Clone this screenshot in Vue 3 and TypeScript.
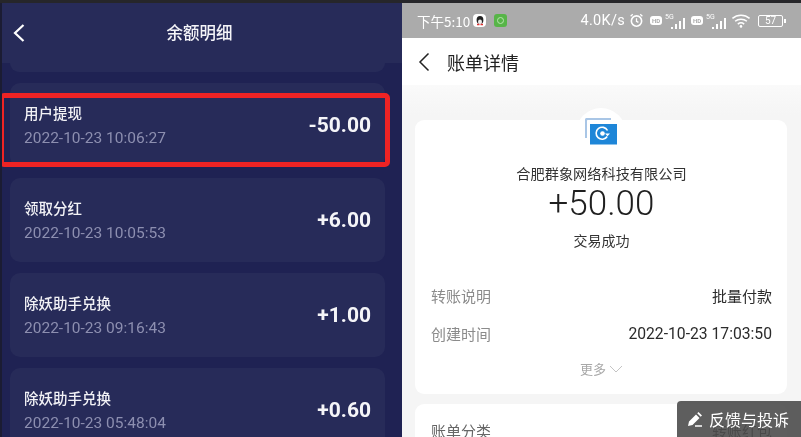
<template>
  <div class="screen">
    <div class="top-strip"></div>
    <div class="panels">
      <section class="wallet">
        <header class="wallet-head">
          <svg class="wallet-back" viewBox="0 0 14 20" width="14" height="20">
            <path d="M11.500 2 3 10l8.500 8" fill="none" stroke="#fff" stroke-width="2.200" />
          </svg>
          <h1 class="wallet-title">余额明细</h1>
        </header>
        <div class="wallet-list">
          <div class="stub"></div>
          <div v-for="item in records" :key="item.time" class="record">
            <div>
              <div class="record-name">{{ item.name }}</div>
              <div class="record-time">{{ item.time }}</div>
            </div>
            <div class="record-amount">{{ item.amount }}</div>
          </div>
        </div>
        <div class="mark"></div>
      </section>

      <section class="bill">
        <div class="status">
          <span class="clock">下午5:10</span>
          <span class="qq">
            <svg viewBox="0 0 12 12" width="12" height="12">
              <ellipse cx="6" cy="5" rx="3.400" ry="4" fill="#222" />
              <ellipse cx="6" cy="7" rx="2" ry="2.400" fill="#eee" />
              <path d="M3 9.500h2.500M6.500 9.500H9" stroke="#d33" stroke-width="1.400" />
            </svg>
          </span>
          <span class="app-badge"><i></i></span>
          <span class="status-right">
            <span class="speed">4.0K/s</span>
            <svg viewBox="0 0 14 14" width="15" height="15">
              <circle cx="7" cy="7.500" r="4.800" fill="none" stroke="#fff" stroke-width="1.500" />
              <path d="M7 5v2.700l1.800 1M1.500 3 3.500 1.200M12.500 3l-2-1.800" fill="none" stroke="#fff" stroke-width="1.200" />
            </svg>
            <span v-for="sim in 2" :key="sim" class="signal-group">
              <span class="hd">HD</span>
              <span class="cell">
                <span class="net">5G</span>
                <span class="bars"><i v-for="h in barHeights" :key="h" :style="{ height: h + 'px' }"></i></span>
              </span>
            </span>
            <svg class="wifi" viewBox="0 0 18 14" width="20" height="15">
              <path d="M1 5c4.500-4 11.500-4 16 0M3.500 7.700c3-2.600 8-2.600 11 0M6 10.300c1.700-1.300 4.300-1.300 6 0" fill="none" stroke="#fff" stroke-width="1.400" />
              <circle cx="9" cy="12.500" r="1.200" fill="#fff" />
            </svg>
            <span class="battery">57</span>
          </span>
        </div>
        <nav class="bill-nav">
          <svg viewBox="0 0 12 20" width="12" height="20">
            <path d="M10.500 1.500 2 10l8.500 8.500" fill="none" stroke="#222" stroke-width="1.500" />
          </svg>
          <span class="bill-title">账单详情</span>
        </nav>
        <div class="bill-body">
          <div class="bill-card">
            <div class="logo-halo">
              <svg viewBox="0 0 32 27" width="32" height="27">
                <path d="M0 20V1.500C0 .7.700 0 1.500 0H26v2H3c-.6 0-1 .4-1 1v17z" fill="#a9c6e6" />
                <rect x="5" y="6" width="27" height="20.500" fill="#1e86d8" />
                <path d="M22.500 12.500a6 6 0 1 0-.3 6" fill="none" stroke="#fff" stroke-width="1.600" />
                <path d="M20 15.500h5l-2.500 2.800z" fill="#fff" />
                <circle cx="17.500" cy="15.500" r="2.300" fill="#fff" />
              </svg>
            </div>
            <div class="payer">合肥群象网络科技有限公司</div>
            <div class="paid">+50.00</div>
            <div class="state">交易成功</div>
            <div class="row first-row">
              <span class="row-label">转账说明</span>
              <span class="row-value cjk">批量付款</span>
            </div>
            <div class="row">
              <span class="row-label">创建时间</span>
              <span class="row-value">2022-10-23 17:03:50</span>
            </div>
            <div class="more">
              更多
              <svg viewBox="0 0 14 8" width="14" height="8">
                <path d="M1 1l6 6 6-6" fill="none" stroke="#c4c4c4" stroke-width="1" />
              </svg>
            </div>
          </div>
          <div class="bill-card next-card">
            <span class="row-label dark">账单分类</span>
            <span class="row-value cjk">转账红包</span>
          </div>
        </div>
        <div class="feedback">
          <svg viewBox="0 0 16 16" width="16" height="16">
            <path d="M1 15l1-4.500 7-7 3.500 3.500-7 7zM10.200 2.300l1.300-1.300 3.500 3.500-1.300 1.300z" fill="#fff" />
            <path d="M8 15h7" stroke="#fff" stroke-width="1.500" />
          </svg>
          反馈与投诉
        </div>
      </section>
    </div>
  </div>
</template>

<script setup lang="ts">
interface BalanceRecord {
  name: string;
  time: string;
  amount: string;
}

const records: BalanceRecord[] = [
  { name: '用户提现', time: '2022-10-23 10:06:27', amount: '-50.00' },
  { name: '领取分红', time: '2022-10-23 10:05:53', amount: '+6.00' },
  { name: '除妖助手兑换', time: '2022-10-23 09:16:43', amount: '+1.00' },
  { name: '除妖助手兑换', time: '2022-10-23 05:48:04', amount: '+0.60' },
];

const barHeights = [2, 5, 8, 11];
</script>

<style>
html,
body {
  margin: 0;
  overflow: hidden;
}
</style>

<style scoped>
.screen {
  width: 801px;
  height: 437px;
  overflow: hidden;
  display: flex;
  flex-direction: column;
  font-family: Roboto, "Noto Sans CJK SC", sans-serif;
}

.top-strip {
  height: 3px;
  flex: none;
  background: #26262a;
}

.panels {
  flex: 1;
  min-height: 0;
  display: flex;
  filter: blur(0.35px);
}

.wallet {
  position: relative;
  width: 402px;
  flex: none;
  overflow: hidden;
  background: #1f2253;
  border-left: 2px solid #1b1c33;
  box-sizing: border-box;
}

.wallet-head {
  height: 60px;
  display: flex;
  align-items: center;
  justify-content: center;
  position: relative;
  background: #272b59;
}

.wallet-back {
  position: absolute;
  left: 10px;
  top: 20px;
}

.wallet-title {
  margin: 0 5px 3px 0;
  font-size: 16.500px;
  font-weight: 500;
  color: #f4f4f8;
  font-family: "Noto Sans CJK SC", sans-serif;
}

.wallet-list {
  display: flex;
  flex-direction: column;
  gap: 11px;
  padding: 0 17px 0 8px;
}

.stub {
  height: 9px;
  background: #272b59;
  border-radius: 0 0 10px 10px;
}

.record {
  height: 84px;
  flex: none;
  box-sizing: border-box;
  padding: 0 14px;
  border-radius: 10px;
  background: #272b59;
  display: flex;
  align-items: center;
  justify-content: space-between;
}

.record-name {
  font-family: "Noto Sans CJK SC", sans-serif;
  font-size: 14.500px;
  font-weight: 500;
  line-height: 20px;
  color: #f2f2f6;
}

.record-time {
  margin-top: 5px;
  font-size: 15.500px;
  line-height: 20px;
  color: #8d8fb0;
}

.record-amount {
  font-size: 21px;
  font-weight: 700;
  color: #f5f5f8;
}

.mark {
  position: absolute;
  left: -3px;
  top: 90px;
  width: 391px;
  height: 74px;
  box-sizing: border-box;
  border: 5px solid #ee2324;
  border-radius: 5px;
}

.bill {
  position: relative;
  flex: 1;
  min-width: 0;
  overflow: hidden;
  display: flex;
  flex-direction: column;
  background: #f5f5f5;
}

.status {
  height: 35px;
  flex: none;
  box-sizing: border-box;
  padding: 0 18px 0 15px;
  display: flex;
  align-items: center;
  background: #ababab;
  color: #fff;
  font-size: 14px;
}

.clock {
  font-family: "Noto Sans CJK SC", sans-serif;
  font-size: 13.500px;
}

.qq {
  width: 13px;
  height: 13px;
  margin-left: 3px;
  border-radius: 4px;
  background: #fff;
  display: flex;
  align-items: center;
  justify-content: center;
}

.app-badge {
  width: 13px;
  height: 13px;
  margin-left: 8px;
  border-radius: 3px;
  background: #57b548;
  display: flex;
  align-items: center;
  justify-content: center;
}

.app-badge i {
  width: 5px;
  height: 5px;
  border: 1px solid #b9e5b0;
  border-radius: 50%;
}

.status-right {
  margin-left: auto;
  display: flex;
  align-items: center;
  gap: 4px;
}

.speed {
  font-size: 14.500px;
  letter-spacing: 0.300px;
}

.signal-group {
  display: flex;
  align-items: center;
  gap: 3px;
  margin-left: 2px;
}

.hd {
  width: 12px;
  height: 9px;
  border-radius: 3px;
  background: #fff;
  color: #ababab;
  font-size: 6px;
  line-height: 9px;
  font-weight: 700;
  text-align: center;
}

.cell {
  position: relative;
  width: 20px;
  height: 16px;
  display: flex;
  align-items: flex-end;
  justify-content: flex-end;
}

.net {
  position: absolute;
  left: 0;
  top: 0;
  font-size: 7px;
  line-height: 8px;
}

.bars {
  display: flex;
  align-items: flex-end;
  gap: 1.500px;
}

.bars i {
  width: 2.500px;
  background: #fff;
}

.wifi {
  margin-left: 1px;
}

.battery {
  position: relative;
  width: 23px;
  height: 10px;
  margin-left: 3px;
  border: 1px solid #fff;
  border-radius: 2px;
  font-size: 10px;
  line-height: 10px;
  text-align: center;
}

.battery::after {
  content: "";
  position: absolute;
  right: -4px;
  top: 3px;
  width: 2px;
  height: 4px;
  background: #fff;
}

.bill-nav {
  height: 47px;
  flex: none;
  padding-left: 16px;
  display: flex;
  align-items: center;
  gap: 17px;
  background: #fff;
}

.bill-title {
  font-family: "Noto Sans CJK SC", sans-serif;
  font-size: 18px;
  color: #222;
}

.bill-body {
  flex: 1;
  min-height: 0;
  padding: 35px 14px 0 13px;
  display: flex;
  flex-direction: column;
  gap: 10px;
  background: linear-gradient(#fafafa, #f5f5f5 30px);
}

.bill-card {
  position: relative;
  flex: none;
  height: 274px;
  box-sizing: border-box;
  padding: 0 15px 0 16px;
  background: #fff;
  border-radius: 9px;
  font-family: "Noto Sans CJK SC", sans-serif;
}

.next-card {
  height: 60px;
  padding-top: 16px;
  display: flex;
  align-items: flex-start;
  justify-content: space-between;
}

.logo-halo {
  position: absolute;
  left: 50%;
  top: -12px;
  width: 50px;
  height: 37px;
  transform: translateX(-50%);
  border-radius: 25px 25px 0 0;
  background: #fff;
  display: flex;
  align-items: flex-end;
  justify-content: center;
  padding-bottom: 6px;
}

.payer {
  padding-top: 43px;
  font-size: 14.200px;
  line-height: 20px;
  text-align: center;
  color: #333;
}

.paid {
  font-family: Roboto, sans-serif;
  font-size: 35px;
  font-weight: 300;
  line-height: 42px;
  text-align: center;
  color: #1f1f1f;
}

.state {
  margin-top: 5px;
  font-size: 14px;
  line-height: 20px;
  text-align: center;
  color: #333;
}

.row {
  height: 38px;
  display: flex;
  align-items: center;
  justify-content: space-between;
}

.first-row {
  margin-top: 26px;
}

.row-label {
  font-size: 15px;
  color: #8b8b8b;
}

.row-label.dark {
  color: #666;
}

.row-value {
  font-family: Roboto, "Noto Sans CJK SC", sans-serif;
  font-size: 15.700px;
  color: #2b2b2b;
}

.row-value.cjk {
  font-size: 15px;
}

.more {
  margin-top: 7px;
  display: flex;
  align-items: center;
  justify-content: center;
  gap: 3px;
  font-size: 13px;
  color: #a8a8a8;
}

.feedback {
  position: absolute;
  right: 0;
  bottom: 0;
  width: 124px;
  height: 36px;
  box-sizing: border-box;
  padding-left: 10px;
  display: flex;
  align-items: center;
  gap: 6px;
  border-radius: 4px 0 0 0;
  background: rgba(76, 76, 76, 0.9);
  color: #fff;
  font-family: "Noto Sans CJK SC", sans-serif;
  font-size: 16px;
}
</style>
